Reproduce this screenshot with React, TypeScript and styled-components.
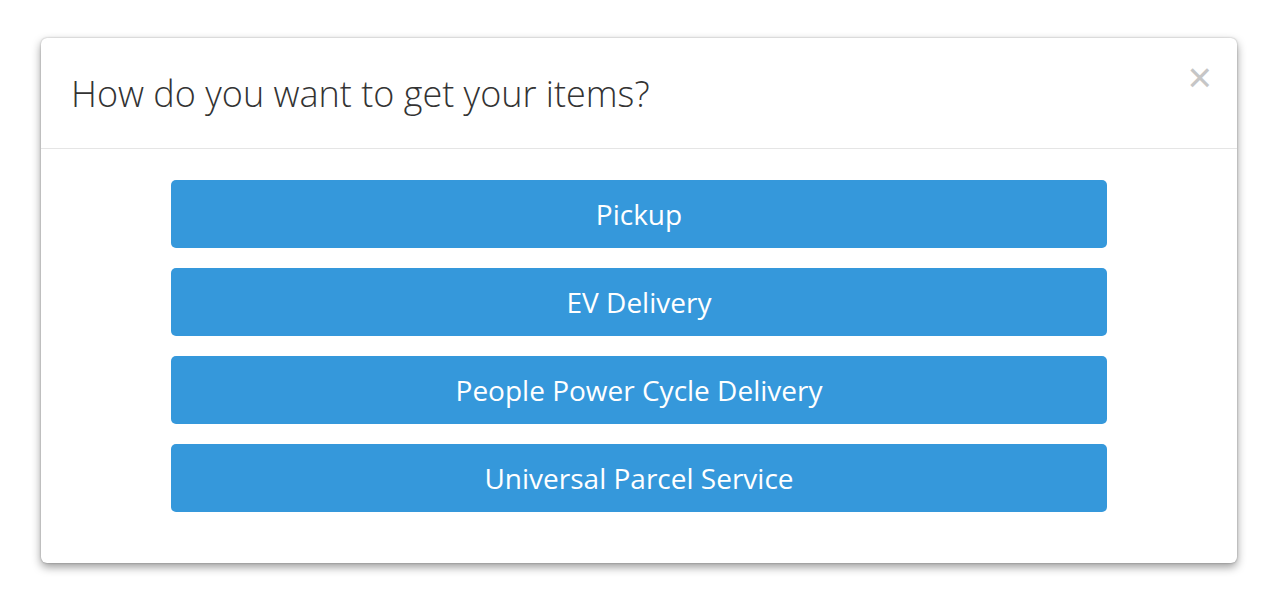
import React from "react";
import styled, { createGlobalStyle } from "styled-components";

const GlobalStyle = createGlobalStyle`
  html, body {
    margin: 0;
    padding: 0;
    background: #ffffff;
    font-family: "Open Sans", "Liberation Sans", sans-serif;
  }
  * { box-sizing: border-box; }
`;

const Page = styled.div`
  width: 1282px;
  height: 604px;
  padding: 38px 45px 0 41px;
`;

const Modal = styled.div`
  position: relative;
  width: 1196px;
  background: #fff;
  border-radius: 6px;
  box-shadow: 0 0 2px rgba(0, 0, 0, 0.3), 0 4px 10px rgba(0, 0, 0, 0.4);
`;

const Header = styled.div`
  height: 111px;
  padding: 0 30px;
  display: flex;
  align-items: center;
  border-bottom: 1px solid #e5e5e5;
`;

const Title = styled.h4`
  margin: 0;
  font-size: 36px;
  font-weight: 300;
  color: #333;
  line-height: 1.2;
  padding-top: 2px;
`;

const Close = styled.button`
  position: absolute;
  top: 19px;
  right: 25px;
  border: 0;
  background: none;
  padding: 0;
  color: #c6c6c6;
  font-size: 42px;
  font-weight: 400;
  line-height: 1;
  cursor: pointer;
  font-family: "Liberation Sans", sans-serif;
`;

const Body = styled.div`
  padding: 31px 130px 51px;
  display: flex;
  flex-direction: column;
  gap: 20px;
`;

const Choice = styled.button`
  height: 68px;
  border: 0;
  border-radius: 5px;
  background: #3598db;
  color: #fff;
  font-family: "Open Sans", "Liberation Sans", sans-serif;
  font-size: 28px;
  font-weight: 400;
  cursor: pointer;
`;

const options = ["Pickup", "EV Delivery", "People Power Cycle Delivery", "Universal Parcel Service"];

export default function App() {
  return (
    <Page>
      <GlobalStyle />
      <Modal>
        <Header>
          <Title>How do you want to get your items?</Title>
        </Header>
        <Close aria-label="Close">×</Close>
        <Body>
          {options.map((o) => (
            <Choice key={o}>{o}</Choice>
          ))}
        </Body>
      </Modal>
    </Page>
  );
}
